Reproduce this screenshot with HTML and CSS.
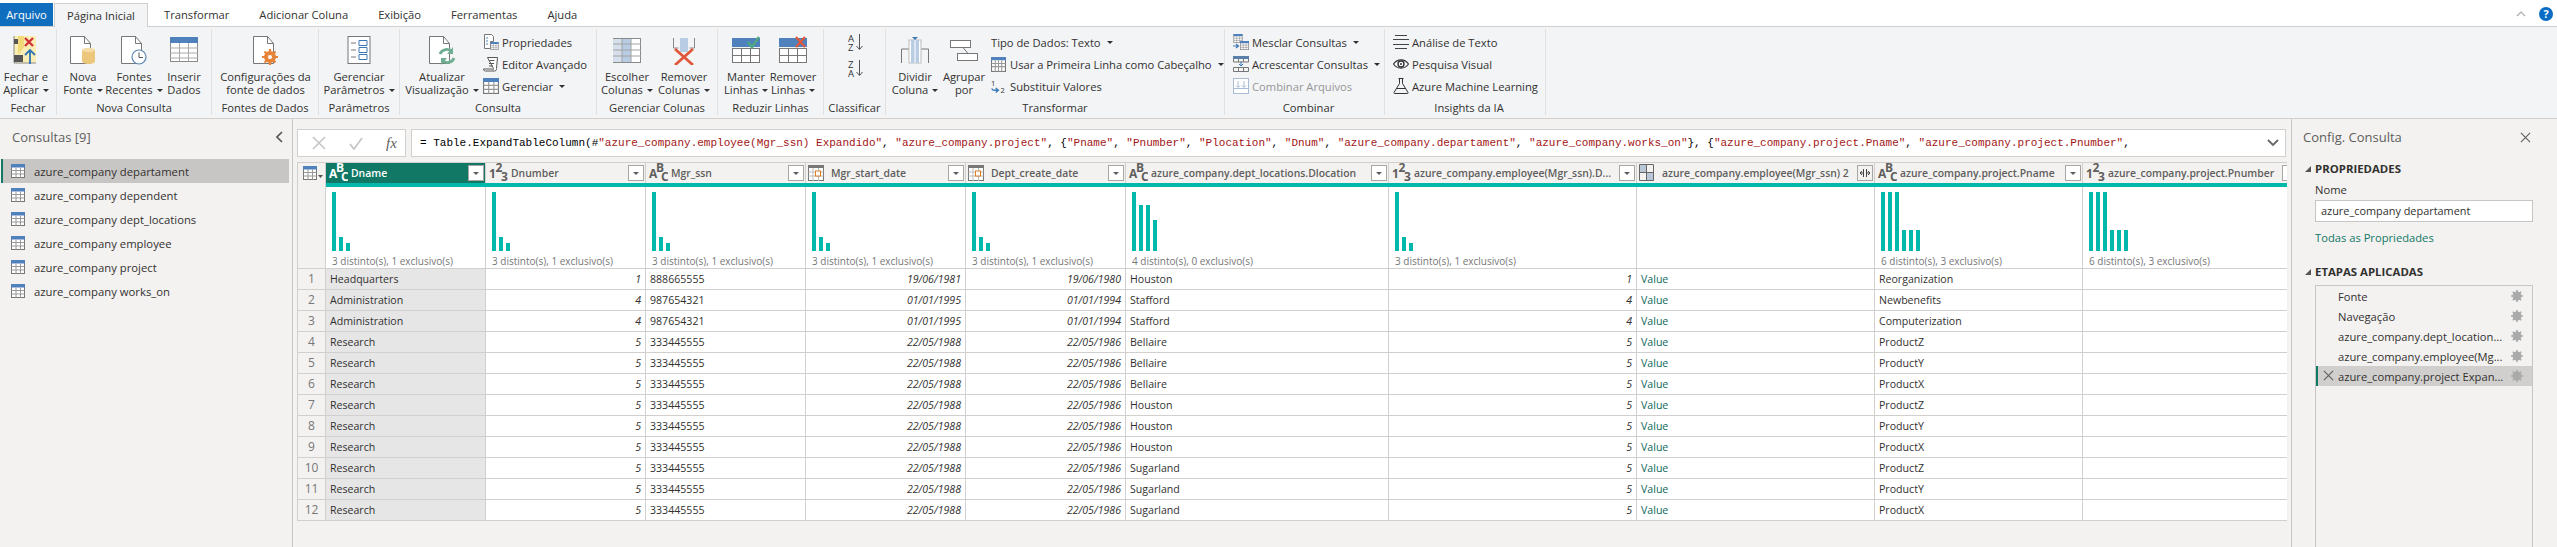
FILE: index.html
```html
<!DOCTYPE html>
<html lang="pt-BR">
<head>
    <meta charset="UTF-8">
    <title>Power Query</title>
    <link rel="stylesheet" href="styles.css">
</head>
<body>

<!-- shared icons -->
<svg class="sprite" xmlns="http://www.w3.org/2000/svg">
    <symbol id="doc" viewBox="0 0 28 30"><path d="M1.5 1.5h14l6 7v20h-20z" fill="#fff" stroke="#777"/><path d="M15.5 1.5v7h6" fill="none" stroke="#777"/></symbol>
    <symbol id="tbl" viewBox="0 0 14 14"><rect x=".5" y=".5" width="13" height="13" fill="#fff" stroke="#777"/><rect x="0" y="0" width="14" height="3.5" fill="#4f81bd"/><path d="M.5 6.5h13M.5 10h13M5 3.5v10M9.500 3.500v10" stroke="#999" fill="none"/></symbol>
    <symbol id="abc" viewBox="0 0 20 20"><text x="1" y="15" font-size="12">A</text><text x="8" y="9" font-size="12">B</text><text x="13" y="18" font-size="12">C</text></symbol>
    <symbol id="n123" viewBox="0 0 20 20"><text x="1" y="15" font-size="12">1</text><text x="7.500" y="9" font-size="12">2</text><text x="13" y="18" font-size="12">3</text></symbol>
    <symbol id="cal" viewBox="0 0 16 16"><rect x=".5" y=".5" width="15" height="15" fill="#fff" stroke="#777"/><rect x="0" y="0" width="16" height="3" fill="#777"/><path d="M.5 7h15M.5 11h15M5 3v13M10.500 3v13" stroke="#bbb" fill="none"/><rect x="7.500" y="6" width="5" height="5" fill="#fff" stroke="#e07b20"/></symbol>
    <symbol id="gear" viewBox="0 0 12 12"><circle cx="6" cy="6" r="3.300" fill="none" stroke="#aaa" stroke-width="2.400"/><path d="M6 0v12M0 6h12M1.800 1.800l8.400 8.400M10.200 1.800l-8.400 8.400" stroke="#aaa" stroke-width="1.600"/></symbol>
    <symbol id="x" viewBox="0 0 12 12"><path d="M1 1l10 10M11 1l-10 10" fill="none" stroke="currentColor" stroke-width="1.200"/></symbol>
</svg>

<div class="tabs">
    <div class="tab tab-file">Arquivo</div>
    <div class="tab tab-active">Página Inicial</div>
    <div class="tab">Transformar</div>
    <div class="tab">Adicionar Coluna</div>
    <div class="tab">Exibição</div>
    <div class="tab">Ferramentas</div>
    <div class="tab">Ajuda</div>
    <div class="tab-tools">
        <svg class="collapse" width="10" height="6" viewBox="0 0 10 6"><path d="M1 5l4-4 4 4" fill="none" stroke="#aaa" stroke-width="1.200"/></svg>
        <span class="help">?</span>
    </div>
</div>

<div class="ribbon">
    <div class="group g-close">
        <div class="group-body">
            <div class="big w52">
                <svg class="ico" viewBox="0 0 28 30"><rect x="2" y="1" width="22" height="27" fill="#fbeeb5"/><path d="M2 1v27h22" fill="none" stroke="#888"/><rect x="2" y="4" width="4" height="5" fill="#555"/><rect x="2" y="20" width="9" height="7" fill="#555"/><path d="M6 1v19l6-8v-11z" fill="#f1d97a"/><path d="M13 3l8 8M21 3l-8 8" stroke="#d13438" stroke-width="2.400"/><path d="M18 29v-13M13 20l5-5 5 5" fill="none" stroke="#2f75b5" stroke-width="1.800"/></svg>
                <span class="lbl">Fechar e<br>Aplicar<i class="caret"></i></span>
            </div>
        </div>
        <div class="group-name">Fechar</div>
    </div>

    <div class="group g-new">
        <div class="group-body">
            <div class="big w52">
                <svg class="ico" viewBox="0 0 28 30"><use href="#doc"/><path d="M13 15v11c0 4 13 4 13 0v-11z" fill="#ecc67a"/><ellipse cx="19.500" cy="15" rx="6.500" ry="2.200" fill="#f5dca8"/></svg>
                <span class="lbl">Nova<br>Fonte<i class="caret"></i></span>
            </div>
            <div class="big w50">
                <svg class="ico" viewBox="0 0 28 30"><use href="#doc"/><circle cx="19" cy="22" r="7" fill="#fff" stroke="#5b87b5" stroke-width="1.200"/><path d="M19 17.500v5h4" fill="none" stroke="#555"/></svg>
                <span class="lbl">Fontes<br>Recentes<i class="caret"></i></span>
            </div>
            <div class="big w50">
                <svg class="ico" viewBox="0 0 28 30"><rect x=".5" y="2.500" width="27" height="24" fill="#fff" stroke="#8a8a8a"/><rect x="0" y="2" width="28" height="6" fill="#4f81bd"/><path d="M0 13h28M0 18h28M0 23h28M9.500 8v18M18.500 8v18" stroke="#aaa" fill="none"/></svg>
                <span class="lbl">Inserir<br>Dados</span>
            </div>
        </div>
        <div class="group-name">Nova Consulta</div>
    </div>

    <div class="group g-sources">
        <div class="group-body">
            <div class="big w107">
                <svg class="ico" viewBox="0 0 28 30"><use href="#doc"/><circle cx="18" cy="22" r="4.500" fill="none" stroke="#e8843a" stroke-width="3"/><path d="M18 14v16M10 22h16M12.500 16.500l11 11M23.500 16.500l-11 11" stroke="#e8843a" stroke-width="2.200"/><circle cx="18" cy="22" r="2" fill="#fff"/></svg>
                <span class="lbl">Configurações da<br>fonte de dados</span>
            </div>
        </div>
        <div class="group-name">Fontes de Dados</div>
    </div>

    <div class="group g-params">
        <div class="group-body">
            <div class="big w80">
                <svg class="ico" viewBox="0 0 28 30"><rect x="3" y="1.500" width="22" height="27" fill="#fff" stroke="#777"/><path d="M6 8h5M6 15h5M6 22h5" stroke="#777"/><path d="M14 5.500h8v5h-8zM14 12.500h8v5h-8zM14 19.500h8v5h-8z" fill="#fff" stroke="#3c78b5"/></svg>
                <span class="lbl">Gerenciar<br>Parâmetros<i class="caret"></i></span>
            </div>
        </div>
        <div class="group-name">Parâmetros</div>
    </div>

    <div class="group g-query">
        <div class="group-body">
            <div class="big w82">
                <svg class="ico" viewBox="0 0 28 30"><use href="#doc"/><path d="M12 19a7 7 0 0 1 12-2M26 23a7 7 0 0 1-12 2" fill="none" stroke="#6fae92" stroke-width="2.800"/><path d="M25 12v7h-6zM13 30v-7h6z" fill="#6fae92"/></svg>
                <span class="lbl">Atualizar<br>Visualização<i class="caret"></i></span>
            </div>
            <div class="small-col">
                <div class="small"><svg class="sico" viewBox="0 0 16 16"><path d="M1.500 .5h7l2 2v5h-3v7h-6z" fill="#fff" stroke="#777"/><path d="M3 4h2M3 7h2M3 10h2" stroke="#4f81bd"/><use href="#tbl" x="7" y="8" width="9" height="8"/></svg>Propriedades</div>
                <div class="small"><svg class="sico" viewBox="0 0 16 16"><path d="M4.500 1.500h10l-1 11c0 2-1 2.500-2 2.500h-9c-1 0-2-.5-2-2h9c0 1 1 1 1-.5z" fill="#fff" stroke="#555"/><path d="M6.500 4.500h5M6 7.500h5M6 10h4" stroke="#555"/></svg>Editor Avançado</div>
                <div class="small"><svg class="sico" viewBox="0 0 14 14"><use href="#tbl"/></svg>Gerenciar<i class="caret"></i></div>
            </div>
        </div>
        <div class="group-name">Consulta</div>
    </div>

    <div class="group g-cols">
        <div class="group-body">
            <div class="big w60">
                <svg class="ico" viewBox="0 0 28 30"><rect x=".5" y="3.500" width="27" height="24" fill="#fff" stroke="#8a8a8a"/><rect x="9" y="4" width="9" height="23" fill="#b8cde4"/><rect x="0" y="4" width="9" height="23" fill="#d6e0ec"/><path d="M0 9h28M0 15h28M0 21h28M9 4v23M18 4v23" stroke="#a2a2a2" fill="none"/></svg>
                <span class="lbl">Escolher<br>Colunas<i class="caret"></i></span>
            </div>
            <div class="big w54">
                <svg class="ico" viewBox="0 0 28 30"><path d="M3.500 3v10h5M24.500 3v10h-5" fill="none" stroke="#8a8a8a"/><rect x="10" y="3" width="8" height="14" fill="#b8cde4"/><path d="M5 14l18 16M23 14l-18 16" stroke="#e0583b" stroke-width="2.800"/></svg>
                <span class="lbl">Remover<br>Colunas<i class="caret"></i></span>
            </div>
        </div>
        <div class="group-name">Gerenciar Colunas</div>
    </div>

    <div class="group g-rows">
        <div class="group-body">
            <div class="big w52">
                <svg class="ico" viewBox="0 0 28 30"><rect x="0" y="3" width="28" height="9" fill="#4f81bd"/><rect x=".5" y="13.500" width="27" height="14" fill="#fff" stroke="#777"/><path d="M0 20.500h28M9.500 13v14M18.500 13v14" stroke="#777"/><path d="M16 7l4 5 7-10" fill="none" stroke="#4fa585" stroke-width="2.600"/></svg>
                <span class="lbl">Manter<br>Linhas<i class="caret"></i></span>
            </div>
            <div class="big w42">
                <svg class="ico" viewBox="0 0 28 30"><rect x="0" y="3" width="28" height="9" fill="#4f81bd"/><rect x=".5" y="13.500" width="27" height="14" fill="#fff" stroke="#777"/><path d="M0 20.500h28M9.500 13v14M18.500 13v14" stroke="#777"/><path d="M17 2l9 10M26 2l-9 10" stroke="#e0583b" stroke-width="2.200"/></svg>
                <span class="lbl">Remover<br>Linhas<i class="caret"></i></span>
            </div>
        </div>
        <div class="group-name">Reduzir Linhas</div>
    </div>

    <div class="group g-sort">
        <div class="group-body">
            <div class="sort-col">
                <svg width="16" height="19" viewBox="0 0 16 19"><text x="0" y="9" font-size="9.500" fill="#3c78b5">A</text><text x="0" y="18" font-size="9.500" fill="#8a4fb5">Z</text><path d="M11.500 1v15M8.500 13l3 3.500 3-3.500" fill="none" stroke="#555"/></svg>
                <svg width="16" height="19" viewBox="0 0 16 19"><text x="0" y="9" font-size="9.500" fill="#8a4fb5">Z</text><text x="0" y="18" font-size="9.500" fill="#3c78b5">A</text><path d="M11.500 1v15M8.500 13l3 3.500 3-3.500" fill="none" stroke="#555"/></svg>
            </div>
        </div>
        <div class="group-name">Classificar</div>
    </div>

    <div class="group g-transform">
        <div class="group-body">
            <div class="big w50">
                <svg class="ico" viewBox="0 0 28 30"><path d="M.5 28v-14h8M27.500 28v-14h-8" fill="none" stroke="#777"/><rect x="8" y="5" width="12" height="23" fill="#fff" stroke="#bbb"/><rect x="10" y="5" width="8" height="23" fill="#b8cde4"/><path d="M14 5v23" stroke="#fff"/><path d="M11 2h6l-3 3z" fill="#3c78b5"/></svg>
                <span class="lbl">Dividir<br>Coluna<i class="caret"></i></span>
            </div>
            <div class="big w48">
                <svg class="ico" viewBox="0 0 28 30"><rect x=".5" y="5.500" width="20" height="7" fill="#fff" stroke="#777"/><rect x="7.500" y="18.500" width="20" height="7" fill="#fff" stroke="#777"/><path d="M13 12.500l5 6" stroke="#777"/></svg>
                <span class="lbl">Agrupar<br>por</span>
            </div>
            <div class="small-col col-types">
                <div class="small">Tipo de Dados: Texto<i class="caret"></i></div>
                <div class="small"><svg class="sico2" viewBox="0 0 14 14"><rect x=".5" y=".5" width="13" height="13" fill="#fff" stroke="#777"/><rect x="0" y="0" width="14" height="3" fill="#4f81bd"/><path d="M.5 6h13M.5 9h13M4 3v11M7 3v11M10 3v11" stroke="#999"/></svg>Usar a Primeira Linha como Cabeçalho<i class="caret"></i></div>
                <div class="small"><svg class="sico2" viewBox="0 0 16 16"><text x="0" y="7" font-size="8" fill="#444">1</text><text x="10" y="15" font-size="8" fill="#444">2</text><path d="M1 10c0 2 2 2 6 2M5 9.500l3 2.500-3 2.500" fill="none" stroke="#3c78b5" stroke-width="1.400"/></svg>Substituir Valores</div>
            </div>
        </div>
        <div class="group-name">Transformar</div>
    </div>

    <div class="group g-combine">
        <div class="group-body">
            <div class="small-col">
                <div class="small"><svg class="sico" viewBox="0 0 16 16"><use href="#tbl" x="0" y="0" width="10" height="9"/><use href="#tbl" x="7" y="7" width="9" height="9"/><path d="M0 12h5M3 10l2.500 2-2.500 2" fill="none" stroke="#3c78b5" stroke-width="1.200"/></svg>Mesclar Consultas<i class="caret"></i></div>
                <div class="small"><svg class="sico" viewBox="0 0 16 16"><rect x="0" y="0" width="16" height="3" fill="#5a7fa8"/><path d="M.5 3v3h15v-3M5.500 3v3M10.500 3v3" fill="none" stroke="#777"/><path d="M8 5.500v4M6 8l2 2 2-2" fill="none" stroke="#3c78b5"/><path d="M.5 11.500h15v4h-15zM5.500 11.500v4M10.500 11.500v4" fill="none" stroke="#777"/></svg>Acrescentar Consultas<i class="caret"></i></div>
                <div class="small is-disabled"><svg class="sico" viewBox="0 0 16 16"><rect x=".5" y=".5" width="15" height="15" fill="#fff" stroke="#a8bdd3"/><path d="M.5 10.500h15M5 3v6M3 7.500l2 2 2-2M11 3v6M9 7.500l2 2 2-2" fill="none" stroke="#a8bdd3"/></svg>Combinar Arquivos</div>
            </div>
        </div>
        <div class="group-name">Combinar</div>
    </div>

    <div class="group g-ai">
        <div class="group-body">
            <div class="small-col">
                <div class="small"><svg class="sico" viewBox="0 0 16 16"><path d="M2 1.500h12M0 5.500h16M0 10.500h16M2 14.500h12" stroke="#444"/></svg>Análise de Texto</div>
                <div class="small"><svg class="sico" viewBox="0 0 16 16"><path d="M.5 8c4-5.500 11-5.500 15 0-4 5.500-11 5.500-15 0z" fill="#fff" stroke="#333" stroke-width="1.200"/><circle cx="8" cy="8" r="3" fill="#fff" stroke="#333" stroke-width="1.400"/><circle cx="8" cy="8" r="1" fill="#333"/></svg>Pesquisa Visual</div>
                <div class="small"><svg class="sico" viewBox="0 0 16 16"><path d="M5.500 .5h5M6.500 .5v5l-5.500 9c-.3.700 0 1 .7 1h12.600c.7 0 1-.3.7-1l-5.500-9v-5M4 10.500h8" fill="none" stroke="#333"/></svg>Azure Machine Learning</div>
            </div>
        </div>
        <div class="group-name">Insights da IA</div>
    </div>
</div>

<div class="main">
    <aside class="queries">
        <div class="panel-title">Consultas [9]
            <svg class="collapse-left" width="7" height="12" viewBox="0 0 7 12"><path d="M6 1l-5 5 5 5" fill="none" stroke="#555" stroke-width="1.600"/></svg>
        </div>
        <div class="query is-selected"><svg class="qico" viewBox="0 0 14 14"><use href="#tbl"/></svg>azure_company departament</div>
        <div class="query"><svg class="qico" viewBox="0 0 14 14"><use href="#tbl"/></svg>azure_company dependent</div>
        <div class="query"><svg class="qico" viewBox="0 0 14 14"><use href="#tbl"/></svg>azure_company dept_locations</div>
        <div class="query"><svg class="qico" viewBox="0 0 14 14"><use href="#tbl"/></svg>azure_company employee</div>
        <div class="query"><svg class="qico" viewBox="0 0 14 14"><use href="#tbl"/></svg>azure_company project</div>
        <div class="query"><svg class="qico" viewBox="0 0 14 14"><use href="#tbl"/></svg>azure_company works_on</div>
    </aside>

    <section class="center">
        <div class="formula-row">
            <div class="formula-btns">
                <svg width="14" height="14" viewBox="0 0 14 14"><path d="M1 1l12 12M13 1l-12 12" stroke="#c8c6c4" stroke-width="1.600"/></svg>
                <svg width="14" height="14" viewBox="0 0 14 14"><path d="M1 8l4 5 8-11" fill="none" stroke="#c8c6c4" stroke-width="1.800"/></svg>
                <span class="fx">fx</span>
            </div>
            <div class="formula">
                <span class="formula-text">= Table.ExpandTableColumn(#<b>"azure_company.employee(Mgr_ssn) Expandido"</b>, <b>"azure_company.project"</b>, {<b>"Pname"</b>, <b>"Pnumber"</b>, <b>"Plocation"</b>, <b>"Dnum"</b>, <b>"azure_company.departament"</b>, <b>"azure_company.works_on"</b>}, {<b>"azure_company.project.Pname"</b>, <b>"azure_company.project.Pnumber"</b>,</span>
                <svg class="formula-more" width="12" height="8" viewBox="0 0 12 8"><path d="M1 1l5 5 5-5" fill="none" stroke="#666" stroke-width="1.800"/></svg>
            </div>
        </div>

        <div class="grid-wrap">
            <table class="grid">
                <colgroup>
                    <col class="c-rn"><col class="c-160"><col class="c-160"><col class="c-160"><col class="c-160"><col class="c-160"><col class="c-263"><col class="c-248"><col class="c-238"><col class="c-208"><col class="c-217">
                </colgroup>
                <thead>
                    <tr class="head">
                        <th><svg class="corner" width="20" height="14" viewBox="0 0 20 14"><use href="#tbl" width="14" height="14"/><path d="M15 9h5l-2.500 3z" fill="#555"/></svg></th>
                        <th class="is-active"><div class="th"><svg class="ty"><use href="#abc"/></svg><span class="name">Dname</span><i class="filter"></i></div></th>
                        <th><div class="th"><svg class="ty"><use href="#n123"/></svg><span class="name">Dnumber</span><i class="filter"></i></div></th>
                        <th><div class="th"><svg class="ty"><use href="#abc"/></svg><span class="name">Mgr_ssn</span><i class="filter"></i></div></th>
                        <th><div class="th"><svg class="ty"><use href="#cal" width="16" height="16" y="2"/></svg><span class="name">Mgr_start_date</span><i class="filter"></i></div></th>
                        <th><div class="th"><svg class="ty"><use href="#cal" width="16" height="16" y="2"/></svg><span class="name">Dept_create_date</span><i class="filter"></i></div></th>
                        <th><div class="th"><svg class="ty"><use href="#abc"/></svg><span class="name">azure_company.dept_locations.Dlocation</span><i class="filter"></i></div></th>
                        <th><div class="th"><svg class="ty"><use href="#n123"/></svg><span class="name">azure_company.employee(Mgr_ssn).D...</span><i class="filter"></i></div></th>
                        <th><div class="th"><svg class="ty" viewBox="0 0 20 20"><path d="M1 2h7v8h-7zM8 10h7v8h-7z" fill="#b8c6d8"/><path d="M.5 1.500h14v16h-14zM.5 9.500h14M7.500 1.500v16" fill="none" stroke="#666"/></svg><span class="name">azure_company.employee(Mgr_ssn) 2</span><i class="expand"><svg width="12" height="8" viewBox="0 0 12 8"><path d="M5 4h-4M3 2l-2 2 2 2M7 4h4M9 2l2 2-2 2M4.500 0v8M7.500 0v8" fill="none" stroke="#444"/></svg></i></div></th>
                        <th><div class="th"><svg class="ty"><use href="#abc"/></svg><span class="name">azure_company.project.Pname</span><i class="filter"></i></div></th>
                        <th><div class="th"><svg class="ty"><use href="#n123"/></svg><span class="name">azure_company.project.Pnumber</span><i class="filter"></i></div></th>
                    </tr>
                    <tr class="quality"><th></th><th colspan="10"></th></tr>
                    <tr class="profile">
                        <td class="rn"></td>
                        <td><div class="bars"><i class="b59"></i><i class="b14"></i><i class="b8"></i></div><p class="stat">3 distinto(s), 1 exclusivo(s)</p></td>
                        <td><div class="bars"><i class="b59"></i><i class="b14"></i><i class="b8"></i></div><p class="stat">3 distinto(s), 1 exclusivo(s)</p></td>
                        <td><div class="bars"><i class="b59"></i><i class="b14"></i><i class="b8"></i></div><p class="stat">3 distinto(s), 1 exclusivo(s)</p></td>
                        <td><div class="bars"><i class="b59"></i><i class="b14"></i><i class="b8"></i></div><p class="stat">3 distinto(s), 1 exclusivo(s)</p></td>
                        <td><div class="bars"><i class="b59"></i><i class="b14"></i><i class="b8"></i></div><p class="stat">3 distinto(s), 1 exclusivo(s)</p></td>
                        <td><div class="bars"><i class="b59"></i><i class="b46"></i><i class="b46"></i><i class="b31"></i></div><p class="stat">4 distinto(s), 0 exclusivo(s)</p></td>
                        <td><div class="bars"><i class="b59"></i><i class="b14"></i><i class="b8"></i></div><p class="stat">3 distinto(s), 1 exclusivo(s)</p></td>
                        <td></td>
                        <td><div class="bars"><i class="b59"></i><i class="b59"></i><i class="b59"></i><i class="b21"></i><i class="b21"></i><i class="b21"></i></div><p class="stat">6 distinto(s), 3 exclusivo(s)</p></td>
                        <td><div class="bars"><i class="b59"></i><i class="b59"></i><i class="b59"></i><i class="b21"></i><i class="b21"></i><i class="b21"></i></div><p class="stat">6 distinto(s), 3 exclusivo(s)</p></td>
                    </tr>
                </thead>
                <tbody>
                    <tr><td class="rn">1</td><td class="key">Headquarters</td><td class="num">1</td><td>888665555</td><td class="num">19/06/1981</td><td class="num">19/06/1980</td><td>Houston</td><td class="num">1</td><td class="val">Value</td><td>Reorganization</td><td class="num n-red">20</td></tr>
                    <tr><td class="rn">2</td><td class="key">Administration</td><td class="num">4</td><td>987654321</td><td class="num">01/01/1995</td><td class="num">01/01/1994</td><td>Stafford</td><td class="num">4</td><td class="val">Value</td><td>Newbenefits</td><td class="num n-red">30</td></tr>
                    <tr><td class="rn">3</td><td class="key">Administration</td><td class="num">4</td><td>987654321</td><td class="num">01/01/1995</td><td class="num">01/01/1994</td><td>Stafford</td><td class="num">4</td><td class="val">Value</td><td>Computerization</td><td class="num n-orange">10</td></tr>
                    <tr><td class="rn">4</td><td class="key">Research</td><td class="num">5</td><td>333445555</td><td class="num">22/05/1988</td><td class="num">22/05/1986</td><td>Bellaire</td><td class="num">5</td><td class="val">Value</td><td>ProductZ</td><td class="num">3</td></tr>
                    <tr><td class="rn">5</td><td class="key">Research</td><td class="num">5</td><td>333445555</td><td class="num">22/05/1988</td><td class="num">22/05/1986</td><td>Bellaire</td><td class="num">5</td><td class="val">Value</td><td>ProductY</td><td class="num">2</td></tr>
                    <tr><td class="rn">6</td><td class="key">Research</td><td class="num">5</td><td>333445555</td><td class="num">22/05/1988</td><td class="num">22/05/1986</td><td>Bellaire</td><td class="num">5</td><td class="val">Value</td><td>ProductX</td><td class="num">1</td></tr>
                    <tr><td class="rn">7</td><td class="key">Research</td><td class="num">5</td><td>333445555</td><td class="num">22/05/1988</td><td class="num">22/05/1986</td><td>Houston</td><td class="num">5</td><td class="val">Value</td><td>ProductZ</td><td class="num">3</td></tr>
                    <tr><td class="rn">8</td><td class="key">Research</td><td class="num">5</td><td>333445555</td><td class="num">22/05/1988</td><td class="num">22/05/1986</td><td>Houston</td><td class="num">5</td><td class="val">Value</td><td>ProductY</td><td class="num">2</td></tr>
                    <tr><td class="rn">9</td><td class="key">Research</td><td class="num">5</td><td>333445555</td><td class="num">22/05/1988</td><td class="num">22/05/1986</td><td>Houston</td><td class="num">5</td><td class="val">Value</td><td>ProductX</td><td class="num">1</td></tr>
                    <tr><td class="rn">10</td><td class="key">Research</td><td class="num">5</td><td>333445555</td><td class="num">22/05/1988</td><td class="num">22/05/1986</td><td>Sugarland</td><td class="num">5</td><td class="val">Value</td><td>ProductZ</td><td class="num">3</td></tr>
                    <tr><td class="rn">11</td><td class="key">Research</td><td class="num">5</td><td>333445555</td><td class="num">22/05/1988</td><td class="num">22/05/1986</td><td>Sugarland</td><td class="num">5</td><td class="val">Value</td><td>ProductY</td><td class="num">2</td></tr>
                    <tr><td class="rn">12</td><td class="key">Research</td><td class="num">5</td><td>333445555</td><td class="num">22/05/1988</td><td class="num">22/05/1986</td><td>Sugarland</td><td class="num">5</td><td class="val">Value</td><td>ProductX</td><td class="num">1</td></tr>
                </tbody>
            </table>
        </div>
    </section>

    <aside class="settings">
        <div class="panel-title">Config. Consulta
            <svg class="settings-close"><use href="#x"/></svg>
        </div>
        <div class="section-head head-props"><i class="tri"></i>PROPRIEDADES</div>
        <div class="field-label">Nome</div>
        <div class="field">azure_company departament</div>
        <div class="all-props">Todas as Propriedades</div>
        <div class="section-head head-steps"><i class="tri"></i>ETAPAS APLICADAS</div>
        <div class="steps">
            <div class="step"><span class="step-text">Fonte</span><svg class="step-gear"><use href="#gear"/></svg></div>
            <div class="step"><span class="step-text">Navegação</span><svg class="step-gear"><use href="#gear"/></svg></div>
            <div class="step"><span class="step-text">azure_company.dept_location...</span><svg class="step-gear"><use href="#gear"/></svg></div>
            <div class="step"><span class="step-text">azure_company.employee(Mg...</span><svg class="step-gear"><use href="#gear"/></svg></div>
            <div class="step is-current"><svg class="step-x"><use href="#x"/></svg><span class="step-text">azure_company.project Expan...</span><svg class="step-gear"><use href="#gear"/></svg></div>
        </div>
    </aside>
</div>

</body>
</html>
```

FILE: styles.css
```css
* {
    box-sizing: border-box;
}

html, body {
    height: 100%;
}

body {
    margin: 0;
    overflow: hidden;
    display: flex;
    flex-direction: column;
    background-color: #f3f2f1;
    color: #323130;
    font-family: "Open Sans", "Noto Sans", sans-serif;
    font-size: 11.2px;
}

.sprite {
    display: none;
}

svg text {
    font-family: "Open Sans", sans-serif;
    fill: currentColor;
}

/* Tabs */
.tabs {
    display: flex;
    height: 27px;
    flex: none;
    padding-top: 3px;
    background-color: #fff;
    border-bottom: 1px solid #d2d0ce;
}

.tab {
    padding: 0 15px;
    line-height: 23px;
    white-space: nowrap;
    color: #323130;
}

.tab-file {
    width: 53px;
    padding: 0;
    margin-right: 1px;
    height: 23px;
    text-align: center;
    color: #fff;
    background-color: #106ebe;
}

.tab-active {
    width: 94px;
    height: 24px;
    padding: 0;
    margin-right: 1px;
    text-align: center;
    background-color: #f3f4f6;
    border: 1px solid #d2d0ce;
    border-bottom: none;
}

.tab-tools {
    margin-left: auto;
    display: flex;
    align-items: center;
    height: 21px;
    padding-right: 4px;
}

.collapse {
    margin-right: 13px;
}

.help {
    width: 14px;
    height: 14px;
    border-radius: 50%;
    background-color: #0a6cc4;
    color: #fff;
    font-size: 11px;
    font-weight: 700;
    line-height: 14px;
    text-align: center;
}

/* Ribbon */
.ribbon {
    display: flex;
    flex: none;
    height: 92px;
    padding: 2px 0 3px;
    background-color: #f3f4f6;
    border-bottom: 1px solid #d2d0ce;
}

.group {
    display: flex;
    flex-direction: column;
    flex: none;
    border-right: 1px solid #e1e1e1;
}

.g-close { width: 57px; }
.g-new { width: 155px; }
.g-sources { width: 107px; }
.g-params { width: 81px; }
.g-query { width: 197px; }
.g-cols { width: 121px; }
.g-rows { width: 106px; }
.g-sort { width: 62px; }
.g-transform { width: 339px; }
.g-combine { width: 160px; padding-left: 8px; }
.g-ai { width: 161px; padding-left: 8px; }

.g-query .big { margin-left: 1px; }
.g-rows .big:first-child { margin-left: 2px; }
.g-transform .big:first-child { margin-left: 4px; }

.group-body {
    display: flex;
    height: 73px;
}

.group-name {
    height: 14px;
    line-height: 14px;
    text-align: center;
    white-space: nowrap;
}

.big {
    display: flex;
    flex-direction: column;
    align-items: center;
    flex: none;
    padding-top: 6px;
    text-align: center;
}

.w42 { width: 42px; }
.w48 { width: 48px; }
.w50 { width: 50px; }
.w52 { width: 52px; }
.w54 { width: 54px; }
.w60 { width: 60px; }
.w80 { width: 80px; }
.w82 { width: 82px; }
.w107 { width: 107px; }

.ico {
    width: 28px;
    height: 30px;
    flex: none;
}

.lbl {
    margin-top: 5px;
    line-height: 13px;
    white-space: nowrap;
}

.caret {
    display: inline-block;
    width: 0;
    height: 0;
    margin-left: 4px;
    vertical-align: 2px;
    border-left: 3px solid transparent;
    border-right: 3px solid transparent;
    border-top: 3px solid #323130;
}

.small-col {
    padding-top: 2px;
}

.col-types {
    margin-left: 3px;
}

.small {
    display: flex;
    align-items: center;
    height: 22px;
    white-space: nowrap;
}

.small .caret {
    margin-left: 6px;
    vertical-align: 0;
}

.sico {
    width: 16px;
    height: 16px;
    margin-right: 3px;
    flex: none;
}

.sico2 {
    width: 15px;
    height: 15px;
    margin-right: 4px;
    flex: none;
}

.is-disabled {
    color: #969696;
}

.sort-col {
    display: flex;
    flex-direction: column;
    align-items: center;
    width: 100%;
    gap: 7px;
    padding: 4px 0 0 3px;
}

/* Main area */
.main {
    display: flex;
    flex: 1;
    min-height: 0;
}

.queries {
    width: 293px;
    flex: none;
    border-right: 1px solid #c8c6c4;
}

.panel-title {
    position: relative;
    height: 36px;
    padding-left: 12px;
    line-height: 36px;
    font-size: 13px;
    color: #605e5c;
}

.collapse-left {
    position: absolute;
    top: 12px;
    right: 9px;
}

.queries .panel-title {
    margin-bottom: 4px;
}

.query {
    display: flex;
    align-items: center;
    height: 24px;
    margin: 0 3px 0 1px;
    padding-left: 8px;
    border-left: 2px solid transparent;
    font-size: 11.3px;
    white-space: nowrap;
}

.query.is-selected {
    background-color: #c8c6c4;
    border-left-color: #117865;
}

.qico {
    width: 14px;
    height: 14px;
    margin-right: 9px;
    flex: none;
}

.center {
    width: 1999px;
    flex: none;
    padding: 10px 4px 0;
    border-right: 1px solid #c8c6c4;
}

.formula-row {
    display: flex;
    gap: 5px;
    height: 28px;
    margin-bottom: 5px;
}

.formula-btns {
    display: flex;
    align-items: center;
    width: 109px;
    padding-left: 14px;
    gap: 23px;
    background-color: #fff;
    border: 1px solid #d2d0ce;
}

.fx {
    font-family: "Liberation Serif", serif;
    font-style: italic;
    font-size: 15px;
    color: #605e5c;
}

.formula {
    display: flex;
    align-items: center;
    justify-content: space-between;
    width: 1875px;
    padding: 0 6px 0 8px;
    background-color: #fff;
    border: 1px solid #d2d0ce;
}

.formula-text {
    font-family: "Liberation Mono", monospace;
    font-size: 11px;
    white-space: pre;
    color: #000;
}

.formula-text b {
    font-weight: 400;
    color: #a31515;
}

/* Data grid */
.grid-wrap {
    width: 1990px;
    overflow: hidden;
}

.grid {
    width: 2003px;
    table-layout: fixed;
    border-collapse: separate;
    border-spacing: 0;
    font-size: 10.6px;
}

.c-rn { width: 29px; }
.c-160 { width: 160px; }
.c-263 { width: 263px; }
.c-248 { width: 248px; }
.c-238 { width: 238px; }
.c-208 { width: 208px; }
.c-217 { width: 217px; }

.grid th,
.grid td {
    padding: 0;
    overflow: hidden;
    white-space: nowrap;
    border-right: 1px solid #d2d0ce;
    border-bottom: 1px solid #d2d0ce;
}

.grid th:first-child,
.grid td:first-child {
    border-left: 1px solid #d2d0ce;
}

.head th {
    height: 21px;
    background-color: #f3f2f1;
    border-top: 1px solid #d2d0ce;
    border-bottom: none;
    color: #605e5c;
    text-align: left;
}

.corner {
    display: block;
    margin-left: 5px;
}

.th {
    display: flex;
    align-items: center;
    height: 20px;
    padding: 0 1px 0 2px;
}

.ty {
    width: 20px;
    height: 20px;
    flex: none;
    margin-right: 3px;
    color: #605e5c;
}

.name {
    flex: 1;
    overflow: hidden;
    font-weight: 600;
    font-size: 10.4px;
}

.is-active {
    color: #fff !important;
    background-color: #117865 !important;
}

.is-active .ty {
    color: #fff;
}

.filter,
.expand {
    display: flex;
    align-items: center;
    justify-content: center;
    width: 16px;
    height: 16px;
    flex: none;
    margin-left: 3px;
    background-color: #fff;
    border: 1px solid #a8a6a4;
}

.expand {
    background-color: #f3f2f1;
}

.filter::after {
    content: "";
    border-left: 3px solid transparent;
    border-right: 3px solid transparent;
    border-top: 3px solid #605e5c;
}

.quality th {
    height: 4px;
    border: none;
    background-color: #01b8aa;
}

.quality th:first-child {
    background-color: #f3f2f1;
    border-left: 1px solid #d2d0ce;
    border-right: 1px solid #d2d0ce;
}

.profile td {
    height: 82px;
    vertical-align: top;
    background-color: #fff;
}

.profile .rn {
    background-color: #f3f2f1;
}

.bars {
    display: flex;
    align-items: flex-end;
    gap: 3px;
    height: 59px;
    margin: 5px 0 0 6px;
}

.bars i {
    width: 4px;
    background-color: #01b8aa;
}

.b59 { height: 59px; }
.b46 { height: 46px; }
.b31 { height: 31px; }
.b21 { height: 21px; }
.b14 { height: 14px; }
.b8 { height: 8px; }

.stat {
    margin: 3px 0 0 6px;
    font-size: 10px;
    line-height: 14px;
    color: #777;
}

.grid tbody td {
    height: 21px;
    padding: 0 4px;
    background-color: #fff;
    line-height: 20px;
}

.grid tbody td:last-child {
    padding-right: 0;
}

.grid tbody .rn {
    padding: 0;
    text-align: center;
    font-size: 12px;
    color: #777;
    background-color: #f3f2f1;
}

.grid tbody .key {
    background-color: #e6e6e6;
}

.grid .num {
    text-align: right;
    font-style: italic;
}

.n-red { color: #d13438; }
.n-orange { color: #e8843a; }

.val {
    color: #0f6a5b;
}

/* Right panel */
.settings {
    flex: 1;
    padding-left: 23px;
}

.settings .panel-title {
    margin-left: -12px;
    padding-left: 0;
}

.settings-close {
    position: absolute;
    top: 13px;
    left: 217px;
    width: 11px;
    height: 11px;
    color: #605e5c;
}

.section-head {
    position: relative;
    height: 16px;
    line-height: 16px;
    font-weight: 700;
    font-size: 11.4px;
    color: #323130;
}

.head-props {
    margin-top: 6px;
}

.head-steps {
    margin-top: 18px;
}

.tri {
    position: absolute;
    left: -10px;
    top: 5px;
    border-left: 6px solid transparent;
    border-bottom: 6px solid #555;
}

.field-label {
    margin-top: 5px;
    line-height: 16px;
    font-size: 11.2px;
}

.field {
    width: 218px;
    height: 22px;
    margin-top: 2px;
    padding-left: 5px;
    line-height: 20px;
    font-size: 10.9px;
    background-color: #fff;
    border: 1px solid #c8c6c4;
}

.all-props {
    margin-top: 8px;
    line-height: 16px;
    font-size: 11.2px;
    color: #117865;
}

.steps {
    width: 218px;
    height: 270px;
    margin-top: 5px;
    border: 1px solid #c8c6c4;
}

.step {
    position: relative;
    display: flex;
    align-items: center;
    height: 20px;
    padding-left: 22px;
    font-size: 11.2px;
}

.step-text {
    width: 168px;
    overflow: hidden;
    white-space: nowrap;
}

.step-gear {
    position: absolute;
    right: 9px;
    top: 4px;
    width: 12px;
    height: 12px;
}

.step-x {
    position: absolute;
    left: 7px;
    top: 4px;
    width: 11px;
    height: 11px;
    color: #605e5c;
}

.step.is-current {
    background-color: #d0cfcd;
    border-left: 2px solid #117865;
    padding-left: 20px;
}

.step.is-current .step-x {
    left: 5px;
}
```
